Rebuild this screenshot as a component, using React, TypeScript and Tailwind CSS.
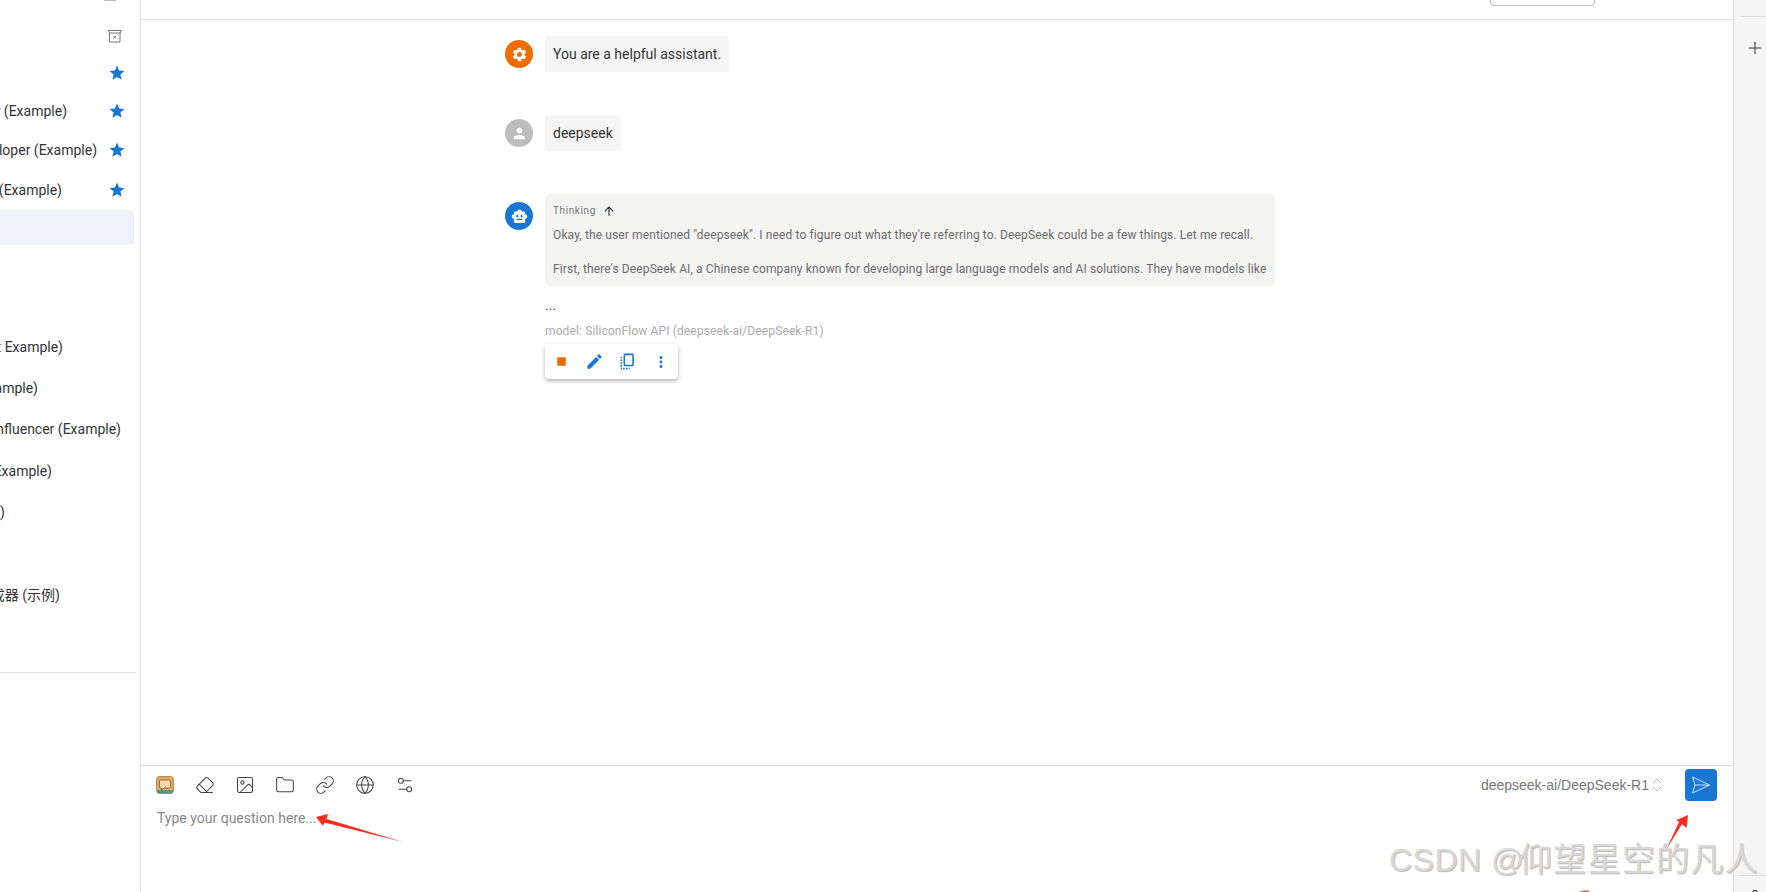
import { Eraser, Folder, Globe, Image, Link, Plus, Settings2 } from 'lucide-react'
import {
  MdArrowUpward,
  MdEdit,
  MdMoreVert,
  MdOutlineCopyAll,
  MdPerson,
  MdSettings,
  MdSmartToy,
  MdStar,
  MdStop,
} from 'react-icons/md'

// rows of the sidebar, the list is scrolled so text is cut on the left
const topRows = [
  { text: '', cls: 'h-[36px]', right: 'mr-0' },
  { text: 'Prompt Engineer (Example)', cls: 'h-[39px]', right: 'mr-[41px]' },
  { text: 'Python Developer (Example)', cls: 'h-[39px]', right: 'mr-[11px]' },
  { text: 'Translator (Example)', cls: 'h-[41px]', right: 'mr-[46px]' },
]

const lowerRows = [
  { text: 'Content Assistant Example)', cls: 'h-[41px]', right: 'mr-[77px]' },
  { text: 'Travel Guide (Example)', cls: 'h-[41px]', right: 'mr-[102px]' },
  { text: 'Social Media Influencer (Example)', cls: 'h-[42px]', right: 'mr-[19px]' },
  { text: 'Nutritionist (Example)', cls: 'h-[41px]', right: 'mr-[88px]' },
  { text: 'Fitness Coach (Example)', cls: 'h-[42px]', right: 'mr-[135px]' },
  { text: '', cls: 'h-[41px]', right: 'mr-0' },
  { text: '图片生成器 (示例)', cls: 'h-[41px]', right: 'mr-[80px]' },
]

function ArchiveX() {
  return (
    <svg width="16" height="14" viewBox="0 0 16 14" fill="none" stroke="#777" strokeWidth="1">
      <path d="M1 1.5h13.5M1.500 1.500l.8 2.500M14 1.500l-.8 2.500M2.500 4h10.500v9h-10.500z" />
      <path d="M6.500 7l2.500 2.500M9 7l-2.500 2.500" />
    </svg>
  )
}

function Sidebar() {
  return (
    <aside className="relative flex h-full w-[141px] shrink-0 flex-col border-r border-[#e0e0e0] bg-white">
      <div className="absolute top-0 left-[104px] h-px w-3 bg-[#bbb]" />
      <div className="h-[17px]" />
      <div className="flex h-[38px] items-center justify-end pr-[17px]">
        <ArchiveX />
      </div>
      {topRows.map((row, i) => (
        <div key={i} className={`flex items-center justify-end overflow-hidden ${row.cls}`}>
          <div className="flex min-w-0 flex-1 justify-end overflow-hidden">
            <span className={`whitespace-nowrap text-sm text-[#333] ${row.right}`}>{row.text}</span>
          </div>
          <MdStar className="mr-[14px] shrink-0 text-[#1976d2]" size={18} />
        </div>
      ))}
      <div className="h-[35px] w-[134px] shrink-0 bg-[#edf3fc]" />
      <div className="h-[81px] shrink-0" />
      {lowerRows.map((row, i) => (
        <div key={i} className={`flex shrink-0 items-center justify-end overflow-hidden ${row.cls}`}>
          <span className={`whitespace-nowrap text-sm text-[#333] ${row.right}`}>{row.text}</span>
        </div>
      ))}
      <div className="h-[57px] shrink-0" />
      <div className="h-px w-[136px] bg-[#e0e0e0]" />
    </aside>
  )
}

function Avatar({ color, children, offset }: { color: string; children: React.ReactNode; offset: string }) {
  return (
    <div className={`flex h-7 w-7 shrink-0 items-center justify-center rounded-full text-white ${color} ${offset}`}>
      {children}
    </div>
  )
}

function Messages() {
  return (
    <div className="flex flex-1 flex-col gap-[43px] overflow-hidden pt-[16px] pl-[364px]">
      <div className="flex gap-3">
        <Avatar color="bg-[#ef6c00]" offset="mt-1">
          <MdSettings size={17} />
        </Avatar>
        <div className="h-9 rounded bg-[#f5f5f5] px-2 py-2 text-sm leading-5 text-[#333]">
          You are a helpful assistant.
        </div>
      </div>
      <div className="flex gap-3">
        <Avatar color="bg-[#bdbdbd]" offset="mt-1">
          <MdPerson size={17} />
        </Avatar>
        <div className="h-9 rounded bg-[#f5f5f5] px-2 py-2 text-sm leading-5 text-[#333]">deepseek</div>
      </div>
      <div className="flex gap-3">
        <Avatar color="bg-[#1976d2]" offset="mt-2">
          <MdSmartToy size={17} />
        </Avatar>
        <div className="flex w-[730px] flex-col">
          <div className="h-[92px] overflow-hidden rounded bg-[#f4f4f2] px-2 pt-2 text-xs tracking-[0.12px] text-[#6b6b6b]">
            <div className="flex h-[17px] items-center gap-[6px]">
              <span className="text-[10px] tracking-[0.6px] text-[#777]">Thinking</span>
              <MdArrowUpward size={14} className="text-[#333]" />
            </div>
            <p className="mt-[7px] leading-[18px] whitespace-nowrap">
              Okay, the user mentioned "deepseek". I need to figure out what they're referring to. DeepSeek could be a
              few things. Let me recall.
            </p>
            <p className="mt-[16px] leading-[18px] whitespace-nowrap">
              First, there's DeepSeek AI, a Chinese company known for developing large language models and AI solutions.
              They have models like
            </p>
          </div>
          <div className="mt-[10px] h-[18px] text-sm leading-[18px] text-[#555]">...</div>
          <div className="mt-[8px] h-[18px] text-xs leading-[18px] tracking-[0.12px] text-[#aaa]">
            model: SiliconFlow API (deepseek-ai/DeepSeek-R1)
          </div>
          <div className="mt-[4px] flex h-[35px] w-[133px] items-center rounded bg-white shadow-[0_2px_4px_rgba(0,0,0,0.3)]">
            <div className="flex w-[33px] shrink-0 justify-center">
              <MdStop size={17} className="text-[#ef6c00]" />
            </div>
            <div className="flex w-[33px] shrink-0 justify-center">
              <MdEdit size={19} className="text-[#1976d2]" />
            </div>
            <div className="flex w-[33px] shrink-0 justify-center">
              <MdOutlineCopyAll size={19} className="text-[#1976d2]" />
            </div>
            <div className="flex w-[33px] shrink-0 justify-center">
              <MdMoreVert size={18} className="text-[#1976d2]" />
            </div>
          </div>
        </div>
      </div>
    </div>
  )
}

function PromptIcon() {
  return (
    <svg width="18" height="18" viewBox="0 0 18 18">
      <rect x="0.5" y="0.5" width="17" height="17" rx="3" fill="#e9a95a" stroke="#b98a52" />
      <path d="M1 14h16v1.500a2 2 0 0 1-2 2H3a2 2 0 0 1-2-2z" fill="#4f9c8c" />
      <path d="M4.500 4h9a1 1 0 0 1 1 1v6a1 1 0 0 1-1 1H8l-2.500 2v-2h-1a1 1 0 0 1-1-1V5a1 1 0 0 1 1-1z" fill="#f6d9a8" stroke="#7a5a34" strokeWidth="0.8" />
    </svg>
  )
}

function SendIcon() {
  return (
    <svg width="20" height="18" viewBox="0 0 20 18" fill="none" stroke="#cfe3f7" strokeWidth="1" strokeLinejoin="round">
      <path d="M1.500 1l17 8-17 8 2.500-8z" />
      <path d="M4 9h14.500" />
    </svg>
  )
}

function InputArea() {
  const tools = [Eraser, Image, Folder, Link, Globe, Settings2]
  return (
    <div className="h-[127px] shrink-0 border-t border-[#e0e0e0]">
      <div className="flex h-[38px] items-center">
        <div className="flex items-center pl-[14px]">
          <div className="flex w-[20px] justify-center">
            <PromptIcon />
          </div>
          {tools.map((Icon, i) => (
            <div key={i} className="ml-5 flex w-[20px] justify-center">
              <Icon size={22} strokeWidth={1.25} className="text-[#444]" />
            </div>
          ))}
        </div>
        <div className="ml-auto flex items-center pr-[16px]">
          <span className="font-['Liberation_Sans',sans-serif] text-sm text-[#777]">deepseek-ai/DeepSeek-R1</span>
          <svg width="12" height="16" viewBox="0 0 12 16" fill="none" stroke="#bbb" strokeWidth="1" className="mr-[22px] ml-[2px]">
            <path d="M2 6l4-4 4 4M2 10l4 4 4-4" />
          </svg>
          <button type="button" className="flex h-8 w-8 items-center justify-center rounded bg-[#1976d2]">
            <SendIcon />
          </button>
        </div>
      </div>
      <div className="pt-[4px] pl-[16px] text-sm leading-5 text-[#888]">Type your question here...</div>
    </div>
  )
}

function RightRail() {
  return (
    <div className="relative flex w-[33px] shrink-0 flex-col items-center border-l border-[#e0e0e0] bg-[#f5f5f5] pl-[10px]">
      <div className="mt-4 ml-[-3px] h-px w-[25px] self-start bg-[#ddd]" />
      <Plus size={20} strokeWidth={1.25} className="mt-[21px] text-[#333]" />
      <div className="mt-auto h-px w-[33px] shrink-0 bg-[#ddd]" />
      <div className="mt-[13px] h-[3px] text-xs leading-3 text-[#333]">8</div>
    </div>
  )
}

export default function App() {
  return (
    <div className="relative flex h-screen w-screen overflow-hidden bg-white font-[Roboto,'Noto_Sans_CJK_SC',sans-serif]">
      <Sidebar />
      <main className="flex h-full min-w-0 flex-1 flex-col">
        <div className="flex h-[20px] shrink-0 items-end justify-end border-b border-[#e0e0e0] pr-[138px]">
          <div className="mb-[13px] h-[30px] w-[105px] rounded border border-[#bbb]" />
        </div>
        <Messages />
        <InputArea />
      </main>
      <RightRail />

      {/* annotations pasted on top of the screenshot */}
      <svg className="pointer-events-none absolute inset-0" width="1766" height="892" fill="#ff2a1a">
        <path d="M316 817L328 814L326.500 819L403 842L324.500 822.500L323 826z" />
        <path d="M1688 815L1686.500 828L1682 824L1666 850L1679 822L1676.500 820z" />
        <path d="M1578 892Q1586 889 1590 891L1589 892z" fill="#f0653a" />
      </svg>
      <div className="pointer-events-none absolute top-[838px] left-[1389px] font-['Liberation_Sans','Noto_Sans_CJK_SC',sans-serif] text-[32px] leading-[44px] tracking-[0.5px] whitespace-nowrap text-[#d8d8d8] [text-shadow:1px_1px_1px_#b8b8b8]">
        CSDN @<span className="-ml-[5px] text-[33px] tracking-[1.3px]">仰望星空的凡人</span>
      </div>
    </div>
  )
}
